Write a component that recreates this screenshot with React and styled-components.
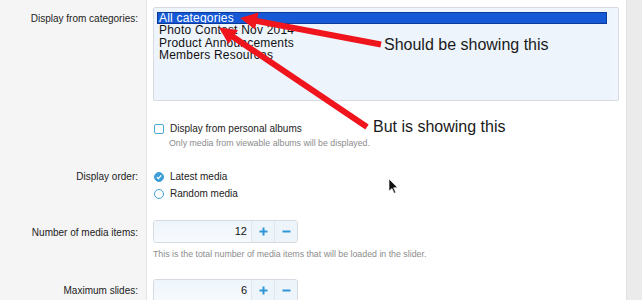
import React from "react";
import styled, { createGlobalStyle } from "styled-components";

const Global = createGlobalStyle`
  html, body { margin: 0; padding: 0; background: #ebebeb; }
  body { font-family: "Liberation Sans", Arial, Helvetica, sans-serif; color: #222; }
`;

const Page = styled.div`
  position: relative;
  display: flex;
  width: 642px;
  height: 300px;
  overflow: hidden;
`;

const Main = styled.div`
  width: 626px;
  height: 100%;
  background: linear-gradient(to right, #f5f5f5 0, #f5f5f5 146px, #e4e4e4 146px, #e4e4e4 147px, #fff 147px);
  display: flex;
  flex-direction: column;
`;

const Gutter = styled.div`
  flex: 1;
  background: #ebebeb;
  border-left: 1px solid #e2e2e2;
`;

const Row = styled.div`
  display: grid;
  grid-template-columns: 146px 1fr;
  column-gap: 7px;
  padding-top: ${(p) => p.$top || 0}px;
`;

const Label = styled.div`
  text-align: right;
  padding-right: 8px;
  font-size: 10px;
  line-height: 14px;
  color: #222;
  padding-top: ${(p) => p.$pt || 0}px;
`;

const Content = styled.div`
  display: flex;
  flex-direction: column;
  align-items: flex-start;
`;

const ListBox = styled.div`
  box-sizing: border-box;
  width: 466px;
  height: 94px;
  border: 1px solid #d6dbe1;
  border-radius: 2px;
  background: #edf4fc;
  padding: 4px 11px 0 3px;
  display: flex;
  flex-direction: column;
  box-shadow: inset -6px 0 0 #f1f6fc;
`;

const Option = styled.div`
  font-size: 12px;
  letter-spacing: 0.2px;
  line-height: 12.3px;
  height: 12.3px;
  padding-left: 2px;
  box-sizing: border-box;
  color: ${(p) => (p.$sel ? "#fff" : "#111")};
  background: ${(p) => (p.$sel ? "#1559d6" : "transparent")};
  outline: ${(p) => (p.$sel ? "1px solid #0b3a9a" : "none")};
  outline-offset: -1px;
  white-space: nowrap;
`;

const CheckLine = styled.label`
  display: flex;
  align-items: center;
  gap: 6px;
  font-size: 10px;
  line-height: 14px;
  color: #222;
  margin-top: ${(p) => p.$mt || 0}px;
`;

const Box = styled.span`
  width: 8px;
  height: 8px;
  border: 1.5px solid #4aa8d8;
  border-radius: 2px;
  background: #fff;
  margin-left: 1px;
`;

const Radio = styled.span`
  box-sizing: border-box;
  width: 10px;
  height: 10px;
  border-radius: 50%;
  border: 1.5px solid #3c9fd8;
  background: ${(p) => (p.$on ? "#3c9fd8" : "#fff")};
  display: flex;
  align-items: center;
  justify-content: center;
  margin-left: 1px;
`;

const Hint = styled.div`
  font-size: 8.8px;
  line-height: 12px;
  color: #8c8c8c;
  margin-left: ${(p) => p.$ml || 0}px;
  margin-top: ${(p) => p.$mt || 0}px;
`;

const Spinner = styled.div`
  display: flex;
  box-sizing: border-box;
  width: 145px;
  height: 23px;
  border: 1px solid #d6dbe1;
  border-radius: 3px;
  overflow: hidden;
`;

const NumInput = styled.div`
  flex: 1;
  background: linear-gradient(to bottom, #eef5fc, #f7fafd);
  font-size: 11px;
  line-height: 21px;
  text-align: right;
  padding-right: 4px;
  color: #111;
`;

const SpinBtn = styled.div`
  width: 22px;
  border-left: 1px solid #e1e6ec;
  background: #edf4fa;
  display: flex;
  align-items: center;
  justify-content: center;
`;

const Overlay = styled.svg`
  position: absolute;
  left: 0;
  top: 0;
  pointer-events: none;
`;

const Note = styled.div`
  position: absolute;
  left: ${(p) => p.$x}px;
  top: ${(p) => p.$y}px;
  font-size: 16px;
  color: #1a1a1a;
  white-space: nowrap;
  font-family: "Liberation Sans", Arial, sans-serif;
`;

const Plus = () => (
  <svg width="9" height="9" viewBox="0 0 9 9">
    <path d="M4.5 0.5v8M0.5 4.5h8" stroke="#2f97d8" strokeWidth="2" />
  </svg>
);
const Minus = () => (
  <svg width="9" height="9" viewBox="0 0 9 9">
    <path d="M0.5 4.5h8" stroke="#2f97d8" strokeWidth="2" />
  </svg>
);

const NumberField = ({ value }) => (
  <Spinner>
    <NumInput>{value}</NumInput>
    <SpinBtn><Plus /></SpinBtn>
    <SpinBtn><Minus /></SpinBtn>
  </Spinner>
);

export default function App() {
  return (
    <>
      <Global />
      <Page>
        <Main>
          <Row $top={7}>
            <Label $pt={5}>Display from categories:</Label>
            <Content>
              <ListBox>
                <Option $sel>All categories</Option>
                <Option>Photo Contest Nov 2014</Option>
                <Option>Product Announcements</Option>
                <Option>Members Resources</Option>
              </ListBox>
              <CheckLine $mt={21}>
                <Box />
                Display from personal albums
              </CheckLine>
              <Hint $ml={16} $mt={1}>Only media from viewable albums will be displayed.</Hint>
            </Content>
          </Row>
          <Row $top={21}>
            <Label>Display order:</Label>
            <Content>
              <CheckLine>
                <Radio $on>
                  <svg width="6" height="6" viewBox="0 0 6 6">
                    <path d="M0.8 3.1 L2.4 4.6 L5.2 1.4" stroke="#fff" strokeWidth="1.3" fill="none" />
                  </svg>
                </Radio>
                Latest media
              </CheckLine>
              <CheckLine $mt={3}>
                <Radio />
                Random media
              </CheckLine>
            </Content>
          </Row>
          <Row $top={19}>
            <Label $pt={6}>Number of media items:</Label>
            <Content>
              <NumberField value="12" />
              <Hint $mt={5}>This is the total number of media items that will be loaded in the slider.</Hint>
            </Content>
          </Row>
          <Row $top={19}>
            <Label $pt={5}>Maximum slides:</Label>
            <Content>
              <NumberField value="6" />
            </Content>
          </Row>
        </Main>
        <Gutter />
        <Overlay width="642" height="300" viewBox="0 0 642 300">
          <line x1="381" y1="44.5" x2="254" y2="20.5" stroke="#f0141c" strokeWidth="6" />
          <polygon points="240,18 258.5,12.5 255,29.5" fill="#f0141c" />
          <line x1="367" y1="127" x2="231" y2="35.5" stroke="#f0141c" strokeWidth="6" />
          <polygon points="219,27.5 238,30 228.5,44" fill="#f0141c" />
          <path d="M389 179 L389 191 L392 188.5 L394.2 193.2 L395.8 192.5 L393.6 187.8 L397.5 187.6 Z" fill="#111" stroke="#fff" strokeWidth="0.6" />
        </Overlay>
        <Note $x={384} $y={36}>Should be showing this</Note>
        <Note $x={373} $y={118}>But is showing this</Note>
      </Page>
    </>
  );
}
